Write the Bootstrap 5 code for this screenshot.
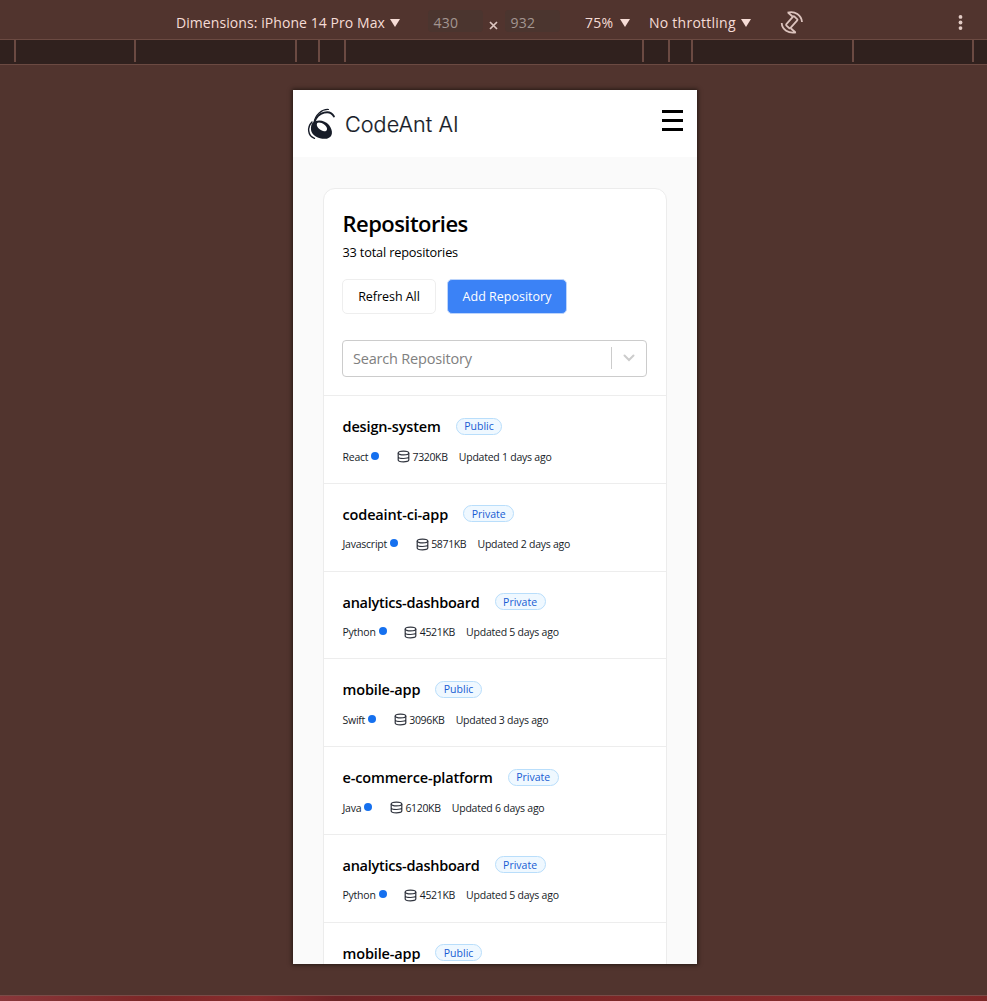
<!DOCTYPE html>
<html lang="en">
<head>
<meta charset="utf-8">
<meta name="viewport" content="width=device-width, initial-scale=1">
<title>CodeAnt AI - Repositories</title>
<link href="https://cdn.jsdelivr.net/npm/bootstrap@5.3.0/dist/css/bootstrap.min.css" rel="stylesheet">
<style>
body{font-family:"Open Sans","Noto Sans",sans-serif;background:#51342e;height:1001px;overflow:hidden;color:#000}
.toolbar{height:39px;color:#f6dcd6;font-size:14px;line-height:20px;padding:13px 22px 0 176px}
.toolbar>*{flex:none;white-space:nowrap}
.device{width:214px;letter-spacing:.07px}
.zoom-level{margin-left:25px;width:35px;letter-spacing:.3px}
.throttle{margin-left:19px;width:92px;letter-spacing:.25px}
.tri{border:5px solid transparent;border-top:8px solid #f6dcd6;border-bottom:0;margin-top:6px}
.dim{background:#4b352f;border-radius:4px;color:#a39591;height:22px;margin-top:-3px;padding:3px 0 0 5.500px;width:55px;letter-spacing:.3px}
.dim.first{margin-left:28px}
.ruler{height:26px;background:#30211e;border-top:1px solid #6b4a42;border-bottom:1px solid #6b4a42}
.ruler i{height:22px;border-right:2px solid #6b4a42;flex:none}
.phone{width:404px;height:874px;margin:25px 0 0 293px;background:#fafafa;overflow:hidden;box-shadow:0 0 4px 1px rgba(20,14,12,.7)}
.topbar{height:67px;padding:0 14px 0 12px}
.logo{margin-top:15px}
.brand{font:300 21.6px/30px Inter,sans-serif;color:#171c28;margin:19px 0 0 6px;letter-spacing:.04px;-webkit-text-stroke:.2px #171c28}
.burger{margin-top:20px}
.burger i{display:block;width:21px;height:2.500px;background:#000;margin-bottom:6.500px}
.panel{width:344px;margin:31px 0 0 30px;border:1px solid #ececec;border-radius:12px 12px 0 0}
.head{height:206px;padding:17px 19px 0 18.500px}
.title{font-size:22px;line-height:34px;font-weight:600;letter-spacing:-.55px}
.total{font-size:12.75px;line-height:20px;letter-spacing:-.18px;margin-top:2px}
.actions{margin:17px 0 0 -.5px;gap:11px}
.btn.act{font-size:12.5px;height:35px;padding:2px 0 0;border-radius:5px}
.refresh{width:94px;border-color:#eee;background:#fff;color:#000;letter-spacing:-.05px}
.add{width:120px;border-color:#bcd4fb;background:#3b82f6;color:#fff}
.search{width:305px;height:37px;border:1px solid #ccc;border-radius:4px;font-size:14.5px;color:#808080;letter-spacing:-.18px;padding:1px 11px 0 10px;margin:26px 0 0 -.6px}
.search .sep{width:1px;height:22px;background:#ccc;margin-right:11px;margin-top:-2px}
.search svg{margin-top:-2px}
.repo{height:87.75px;border-top:1px solid #ededed;padding:20px 18.500px 0}
.rname{font-size:14.5px;line-height:21px;font-weight:600;letter-spacing:-.15px;margin-right:15px}
.rname.tight{letter-spacing:-.25px}
.vis.badge{font-size:10.5px;line-height:14.5px;padding:.5px 7.500px 0;border:1px solid #b9defb;background:#eff8ff;color:#175cd3;font-weight:400;border-radius:9px;margin-top:-1px}
.meta{font-size:10.5px;line-height:16px;letter-spacing:-.24px;color:#171c28;margin-top:11.500px;white-space:nowrap}
.dot{width:8px;height:8px;border-radius:50%;background:#1570ef;margin:-2px 17.500px 0 3.200px}
.size{letter-spacing:-.35px;margin:0 11.200px 0 2.500px}
.footer-strip{height:6px;margin-top:31px;border-top:1px solid #7a4b47;background:linear-gradient(90deg,#88373a,#7c2727 15%,#872c2d 26%,#6b2426 34%,#7c2727 60%,#872c2d 90%,#7c2727)}
</style>
</head>
<body>
<svg class="d-none"><symbol id="db" viewBox="0 0 13 13"><g fill="none" stroke="#30343e" stroke-width="1.200"><ellipse cx="6.500" cy="3" rx="5.300" ry="1.900"/><path d="M1.200 3V10C1.200 12.500 11.800 12.500 11.800 10V3M1.200 6.700C1.200 9.100 11.800 9.100 11.800 6.700"/></g></symbol></svg>
<header class="toolbar d-flex align-items-start">
 <span class="device">Dimensions: iPhone 14 Pro Max</span><i class="tri"></i>
 <span class="dim first">430</span>
 <svg width="9" height="9" viewBox="0 0 9 9" style="margin:8px 7px 0 6px"><path d="M1 1L8 8M8 1L1 8" stroke="#dcc6c0" stroke-width="1.700"/></svg>
 <span class="dim">932</span>
 <span class="zoom-level">75%</span><i class="tri"></i>
 <span class="throttle">No throttling</span><i class="tri"></i>
 <svg width="24" height="24" viewBox="0 0 24 24" style="margin:-3px 0 0 29px" fill="none" stroke="#dcc3bd" stroke-width="1.800"><rect x="9" y="6.300" width="5.600" height="12" rx="1" transform="rotate(42 11.800 12.300)"/><path d="M7.500 2.700C15 .5 21.500 5.500 22 12M8 2.500L12.500 6.500M16 22.300C8.500 24 2 19.500 1.700 13M15.500 22.500L11 18.500"/></svg>
 <svg class="ms-auto" width="9" height="20" viewBox="0 0 9 20" fill="#e3ccc6"><circle cx="4.500" cy="3.900" r="1.900"/><circle cx="4.500" cy="9.500" r="1.900"/><circle cx="4.500" cy="15.100" r="1.900"/></svg>
</header>
<div class="ruler d-flex"><i style="width:16px"></i><i style="width:120px"></i><i style="width:161px"></i><i style="width:23px"></i><i style="width:26px"></i><i style="width:298px"></i><i style="width:26px"></i><i style="width:23px"></i><i style="width:161px"></i><i style="width:120px"></i></div>
<main class="phone">
 <nav class="topbar bg-white d-flex justify-content-between">
  <div class="d-flex"><svg class="logo" width="34" height="36" viewBox="0 0 34 36"><g fill="none" stroke="#171c28" stroke-linecap="round"><path d="M9 18C10 10 17 4 23.500 4.500" stroke-width="1.200"/><path d="M9.500 17C13 7 25 4 29 11.500" stroke-width="1.800"/><path d="M7 17C2 22 2.500 31 9.500 33.300" stroke-width="1.400"/></g><path fill="#171c28" fill-rule="evenodd" d="M8 17.500C12 14 20 15 24 20C28.500 26 28 32 22 33.700C15 34.700 7 31 6 25C5.700 21.500 6.500 18.500 8 17.500ZM12.200 18C10.500 21 14.500 25.500 19 26.300C23.500 26.300 22.500 22 19.500 19.700C17 17.700 13.500 16.700 12.200 18Z"/></svg>
  <span class="brand">CodeAnt AI</span></div>
  <div class="burger"><i></i><i></i><i></i></div>
 </nav>
 <section class="panel bg-white">
  <div class="head">
   <h1 class="title mb-0">Repositories</h1>
   <div class="total">33 total repositories</div>
   <div class="actions d-flex"><button class="btn act refresh">Refresh All</button><button class="btn act add">Add Repository</button></div>
   <div class="search d-flex align-items-center"><span class="me-auto">Search Repository</span><span class="sep"></span><svg width="12" height="8" viewBox="0 0 12 8"><path d="M1.500 1.500L6 6L10.500 1.500" fill="none" stroke="#ccc" stroke-width="2" stroke-linecap="round"/></svg></div>
  </div>
  <div class="repo"><div class="d-flex align-items-center"><span class="rname">design-system</span><span class="badge vis">Public</span></div><div class="meta d-flex align-items-center">React<i class="dot"></i><svg width="13" height="13"><use href="#db"/></svg><span class="size">7320KB</span>Updated 1 days ago</div></div>
  <div class="repo"><div class="d-flex align-items-center"><span class="rname">codeaint-ci-app</span><span class="badge vis">Private</span></div><div class="meta d-flex align-items-center">Javascript<i class="dot"></i><svg width="13" height="13"><use href="#db"/></svg><span class="size">5871KB</span>Updated 2 days ago</div></div>
  <div class="repo"><div class="d-flex align-items-center"><span class="rname tight">analytics-dashboard</span><span class="badge vis">Private</span></div><div class="meta d-flex align-items-center">Python<i class="dot"></i><svg width="13" height="13"><use href="#db"/></svg><span class="size">4521KB</span>Updated 5 days ago</div></div>
  <div class="repo"><div class="d-flex align-items-center"><span class="rname">mobile-app</span><span class="badge vis">Public</span></div><div class="meta d-flex align-items-center">Swift<i class="dot"></i><svg width="13" height="13"><use href="#db"/></svg><span class="size">3096KB</span>Updated 3 days ago</div></div>
  <div class="repo"><div class="d-flex align-items-center"><span class="rname">e-commerce-platform</span><span class="badge vis">Private</span></div><div class="meta d-flex align-items-center">Java<i class="dot"></i><svg width="13" height="13"><use href="#db"/></svg><span class="size">6120KB</span>Updated 6 days ago</div></div>
  <div class="repo"><div class="d-flex align-items-center"><span class="rname tight">analytics-dashboard</span><span class="badge vis">Private</span></div><div class="meta d-flex align-items-center">Python<i class="dot"></i><svg width="13" height="13"><use href="#db"/></svg><span class="size">4521KB</span>Updated 5 days ago</div></div>
  <div class="repo"><div class="d-flex align-items-center"><span class="rname">mobile-app</span><span class="badge vis">Public</span></div></div>
 </section>
</main>
<div class="footer-strip"></div>
<script src="https://cdn.jsdelivr.net/npm/bootstrap@5.3.0/dist/js/bootstrap.bundle.min.js"></script>
</body>
</html>
